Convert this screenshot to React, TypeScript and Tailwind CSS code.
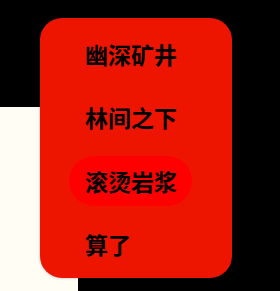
import React from 'react';

const options = ['幽深矿井', '林间之下', '滚烫岩浆', '算了'];

export default function App() {
  const selected = 2;

  return (
    <div className="relative w-[280px] h-[291px] overflow-hidden bg-black">
      {/* Page behind the menu */}
      <div className="absolute left-0 top-[107px] w-[78px] h-[200px] bg-[#fffdf4] rounded-tr-[6px]" />

      {/* Menu */}
      <div className="relative ml-[40px] mt-[18px] w-[192px] h-[260px] rounded-[22px] bg-[#ee1500] shadow-[0_0_3px_rgba(0,0,0,0.3)] pl-[29px] pt-[11px] flex flex-col items-start gap-[13.5px]">
        {options.map((label, i) => (
          <div
            key={label}
            className={`h-[50px] pl-[16px] pr-[15px] flex items-center rounded-full text-[23px] leading-none font-semibold text-black ${
              i === selected ? 'bg-[#ff0000]' : ''
            }`}
            style={{ fontFamily: '"Noto Sans CJK SC", "Noto Sans", sans-serif' }}
          >
            {label}
          </div>
        ))}
      </div>
    </div>
  );
}
